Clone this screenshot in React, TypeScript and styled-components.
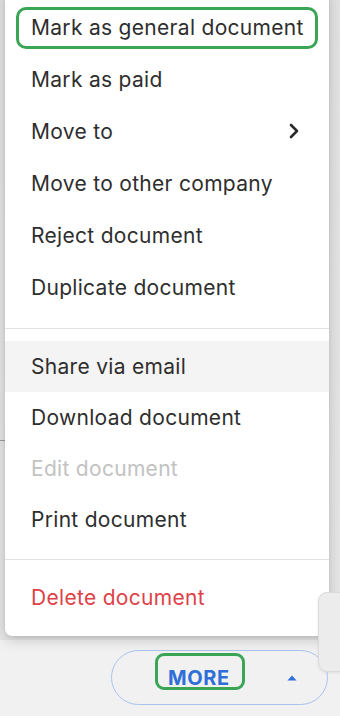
import React from "react";
import styled, { createGlobalStyle, css } from "styled-components";

const GlobalStyle = createGlobalStyle`
  html, body {
    margin: 0;
    padding: 0;
    background: #e4e4e4;
  }
  body {
    font-family: Inter, "Open Sans", "Liberation Sans", sans-serif;
  }
`;

type Item = {
  label: string;
  variant?: "default" | "disabled" | "danger";
  submenu?: boolean;
  hovered?: boolean;
  marked?: boolean;
};

const sections: { items: Item[]; rowHeight: number }[] = [
  {
    rowHeight: 52,
    items: [
      { label: "Mark as general document", marked: true },
      { label: "Mark as paid" },
      { label: "Move to", submenu: true },
      { label: "Move to other company" },
      { label: "Reject document" },
      { label: "Duplicate document" },
    ],
  },
  {
    rowHeight: 51,
    items: [
      { label: "Share via email", hovered: true },
      { label: "Download document" },
      { label: "Edit document", variant: "disabled" },
      { label: "Print document" },
    ],
  },
  {
    rowHeight: 51,
    items: [{ label: "Delete document", variant: "danger" }],
  },
];

const App = () => {
  return (
    <>
      <GlobalStyle />
      <Page>
        <Backdrop>
          <StrayRule />
        </Backdrop>
        <BottomBar>
          <MoreButton>
            <MoreLabel>MORE</MoreLabel>
            <Caret viewBox="0 0 12 7">
              <path d="M6 0.5 L11.5 6.5 L0.5 6.5 Z" fill="#2f6fd8" />
            </Caret>
          </MoreButton>
        </BottomBar>
        <Menu>
          {sections.map((section, i) => (
            <React.Fragment key={i}>
              {i > 0 && <Divider />}
              <Section $first={i === 0} $last={i === sections.length - 1}>
                {section.items.map((item) => (
                  <Row
                    key={item.label}
                    $height={section.rowHeight}
                    $variant={item.variant || "default"}
                    $hovered={item.hovered}
                    $marked={item.marked}
                  >
                    <Label>{item.label}</Label>
                    {item.submenu && (
                      <Chevron viewBox="0 0 10 16">
                        <path
                          d="M2 2 L8 8 L2 14"
                          fill="none"
                          stroke="#2a2a2a"
                          strokeWidth="2.6"
                          strokeLinecap="round"
                          strokeLinejoin="round"
                        />
                      </Chevron>
                    )}
                  </Row>
                ))}
              </Section>
            </React.Fragment>
          ))}
        </Menu>
        <SideCard />
      </Page>
    </>
  );
};

const Page = styled.div`
  position: relative;
  width: 340px;
  height: 716px;
  overflow: hidden;
  display: flex;
  flex-direction: column;
  background: #e4e4e4;
`;

const Backdrop = styled.div`
  flex: 1;
  position: relative;
  background: linear-gradient(to bottom, #e2e2e2, #e6e6e6);
`;

const StrayRule = styled.div`
  position: absolute;
  left: 0;
  top: 440px;
  width: 5px;
  height: 1px;
  background: #9a9a9a;
`;

const BottomBar = styled.div`
  height: 76px;
  box-sizing: border-box;
  padding: 10px 12px 0 111px;
  background: #f1f1f1;
`;

const MoreButton = styled.button`
  width: 217px;
  height: 55px;
  box-sizing: border-box;
  border: 1.5px solid #a7c3ee;
  border-radius: 28px;
  background: transparent;
  display: flex;
  align-items: center;
  padding: 0 30px 0 56px;
  font-family: inherit;
  cursor: pointer;
`;

const MoreLabel = styled.span`
  position: relative;
  flex: 1;
  text-align: left;
  font-size: 20px;
  font-weight: 700;
  color: #2f6fd8;
  letter-spacing: 0.6px;

  &::after {
    content: "";
    position: absolute;
    left: -13px;
    top: -13px;
    width: 84px;
    height: 31px;
    border: 3px solid #3ba556;
    border-radius: 9px;
  }
`;

const Caret = styled.svg`
  width: 10px;
  height: 6px;
`;

const SideCard = styled.div`
  position: absolute;
  left: 318px;
  top: 592px;
  width: 40px;
  height: 80px;
  box-sizing: border-box;
  border: 1px solid #dadada;
  border-radius: 9px;
  background: #ececec;
  box-shadow: 0 1px 3px rgba(0, 0, 0, 0.08);
`;

const Menu = styled.div`
  position: absolute;
  left: 5px;
  top: -11px;
  width: 324px;
  background: #ffffff;
  border-radius: 0 0 7px 7px;
  box-shadow: 0 4px 14px rgba(0, 0, 0, 0.18), 0 1px 3px rgba(0, 0, 0, 0.08);
`;

const Section = styled.div<{ $first?: boolean; $last?: boolean }>`
  padding: ${({ $first }) => ($first ? "12px 0 15px" : "12px 0 14px")};
  ${({ $last }) =>
    $last &&
    css`
      padding-bottom: 13px;
    `}
`;

const Divider = styled.div`
  height: 1px;
  background: #e2e2e2;
`;

const Row = styled.div<{
  $height: number;
  $variant: "default" | "disabled" | "danger";
  $hovered?: boolean;
  $marked?: boolean;
}>`
  position: relative;
  height: ${({ $height }) => $height}px;
  display: flex;
  align-items: center;
  justify-content: space-between;
  padding: 0 30px 0 26px;
  font-size: 21px;
  letter-spacing: 0.3px;
  white-space: nowrap;
  color: ${({ $variant }) =>
    $variant === "disabled" ? "#c2c2c2" : $variant === "danger" ? "#de4148" : "#2e2e2e"};
  background: ${({ $hovered }) => ($hovered ? "#f4f4f4" : "transparent")};

  ${({ $marked }) =>
    $marked &&
    css`
      &::after {
        content: "";
        position: absolute;
        left: 11px;
        right: 11px;
        top: 6px;
        bottom: 4px;
        border: 3px solid #3ba556;
        border-radius: 10px;
      }
    `}
`;

const Label = styled.span`
  flex: none;
`;

const Chevron = styled.svg`
  width: 10px;
  height: 16px;
`;

export default App;
